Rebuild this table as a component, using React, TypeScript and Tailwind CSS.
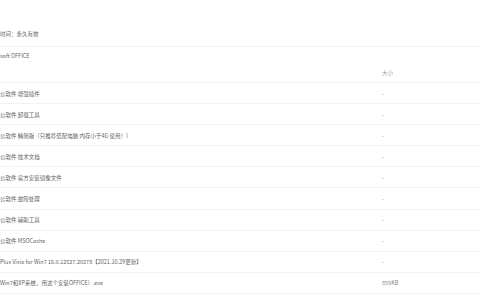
import React from 'react';

const FILES: { name: string; size: string }[] = [
  { name: '公软件 增强插件', size: '-' },
  { name: '公软件 卸载工具', size: '-' },
  { name: '公软件 精简版（只推荐低配电脑 内存小于4G 使用！）', size: '-' },
  { name: '公软件 技术文档', size: '-' },
  { name: '公软件 官方安装镜像文件', size: '-' },
  { name: '公软件 故障处理', size: '-' },
  { name: '公软件 辅助工具', size: '-' },
  { name: '公软件 MSOCache', size: '-' },
  { name: 'Plus Visio for Win7 16.0.12527.20278【2021.10.29更新】', size: '-' },
  { name: 'Win7和XP系统，用这个安装OFFICE）.exe', size: '859KB' },
];

export default function App() {
  return (
    <div
      className="w-[480px] h-[300px] overflow-hidden bg-white text-[5.5px] text-[#5f5f5f]"
      style={{ fontFamily: '"Noto Sans CJK SC", "Liberation Sans", sans-serif' }}
    >
      <div className="h-[47px] flex flex-col justify-end border-b border-[#f2f2f2]">
        <div className="h-[8px] leading-[8px] mb-[8px] whitespace-nowrap">时间：永久有效</div>
      </div>

      <div className="pt-[5px] pb-[5px] border-b border-[#f2f2f2]">
        <div className="h-[8px] leading-[8px] whitespace-nowrap">soft OFFICE</div>
        <div className="mt-[9px] h-[8px] leading-[8px] flex">
          <div className="w-[382px]" />
          <div className="text-[#999]">大小</div>
        </div>
      </div>

      {FILES.map((f) => (
        <div key={f.name} className="h-[21.1px] flex items-center border-b border-[#f2f2f2] leading-[8px]">
          <div className="w-[382px] whitespace-nowrap pt-[1px]">{f.name}</div>
          <div className="text-[#888] pt-[1px]">{f.size}</div>
        </div>
      ))}
    </div>
  );
}
